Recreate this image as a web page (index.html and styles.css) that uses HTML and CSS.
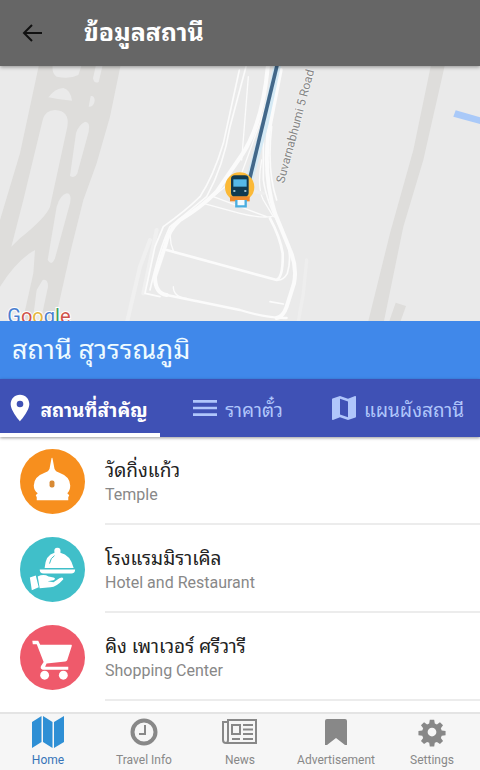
FILE: index.html
```
<!DOCTYPE html>
<html lang="th">
<head>
  <meta charset="UTF-8">
  <meta name="viewport" content="width=device-width, initial-scale=1.0">
  <title>ข้อมูลสถานี</title>
  <link rel="stylesheet" href="styles.css">
</head>
<body>
  <header class="topbar">
    <button class="back" type="button" aria-label="Back">
      <svg viewBox="0 0 24 24"><path d="M22 12H4M12 4l-8 8 8 8"/></svg>
    </button>
    <h1>ข้อมูลสถานี</h1>
  </header>

  <div class="map">
    <svg viewBox="0 18 1440 765" preserveAspectRatio="xMidYMid slice">
      <!-- runways -->
      <g fill="#dedddb">
        <path d="M120 0H365L330 170L290 310L250 420L215 560L165 783H68L100 640L105 570Q50 600 0 680V480L60 280Z"/>
        <path d="M576 0H618L550 300L490 500L432 783H385L450 520L520 270Z" transform="translate(720)"/>
        <path d="M1187 728L1218 738L1202 783H1168Z"/>
      </g>
      <g fill="#eaeaea">
        <path d="M158 15H245L235 45Q210 58 170 50Q155 40 158 15Z"/>
        <path d="M145 112Q165 85 190 84Q212 90 216 122Q180 120 145 112Z"/>
        <path d="M288 15H308L296 66Q282 72 279 55Z"/>
        <path d="M272 108Q284 106 284 122Q282 140 266 140Z"/>
        <path d="M128 180Q136 150 165 150Q210 152 202 200L150 440Q140 470 60 535L34 560L70 420Z"/>
        <path d="M255 185Q272 185 266 215L232 340Q225 356 210 348L228 220Q235 195 255 185Z"/>
        <path d="M200 400Q216 400 210 430L165 595Q155 620 143 600L170 440Q180 405 200 400Z"/>
        <path d="M128 660Q144 655 144 680L122 783H98L110 690Z"/>
      </g>
      <path d="M1367 151L1440 172V192L1360 170Z" fill="#a9c9f8"/>
      <!-- roads -->
      <g fill="none" stroke="#fbfbfb" stroke-linecap="round" stroke-linejoin="round">
        <path stroke="#f0f0f0" stroke-width="12" d="M450 540L420 620L382 783M470 510L430 700"/>
        <path stroke-width="5" d="M718 30L670 250Q640 350 600 410Q560 450 490 500L465 560L435 700L480 710M738 20L690 200Q670 320 620 410Q560 460 510 500Q480 560 450 690"/>
        <path stroke-width="12" d="M805 0Q790 200 715 300L650 395Q600 445 540 480Q505 510 495 560L465 650Q465 700 500 705"/>
        <path stroke-width="7" d="M500 705L720 750Q800 775 860 774"/>
        <path stroke-width="8" d="M500 570L720 630L830 660Q850 650 848 580Q840 530 810 475"/>
        <path stroke-width="4" d="M515 500Q505 540 520 572M610 430L720 460Q780 475 815 470M640 410L720 440L800 470M520 680Q520 710 560 715M830 0L790 160L725 340L620 425M785 300Q770 380 790 420L820 470M745 50L725 300"/>
        <path stroke-width="12" d="M842 30L805 220Q790 350 825 460L870 570Q892 620 882 670L860 740Q850 770 830 774"/>
        <path stroke-width="5" d="M790 210V360Q800 430 850 520Q880 580 862 640Q850 662 830 660M815 200Q800 330 830 420M810 725L850 732"/>
        <path stroke="#eeeeee" stroke-width="10" d="M920 600L910 700L895 783M790 400L700 380"/>
      </g>
      <path d="M835 0L795 190L748 360" fill="none" stroke="#d5eaf5" stroke-width="22"/>
      <path d="M835 0L747 365" fill="none" stroke="#42688a" stroke-width="11"/>
      <!-- station marker -->
      <circle cx="719" cy="381" r="44" fill="#fbb937"/>
      <path d="M690 409H749V424H690Z" fill="#f08a2c"/>
      <path d="M709 420V439H737V420" fill="#f4fbff" stroke="#4aaee0" stroke-width="7"/>
      <rect x="693" y="346" width="53" height="63" rx="11" fill="#103a50"/>
      <path d="M700 358H740V380H700Z" fill="#55b9e8"/>
      <path d="M700 393H706M733 393H739" stroke="#cdeaf5" stroke-width="5"/>
      <text class="road-name" transform="translate(852 371) rotate(-75)">Suvarnabhumi 5 Road</text>
      <text class="logo" x="22" y="789"><tspan fill="#4b7fd0">G</tspan><tspan fill="#d0524a">o</tspan><tspan fill="#e5b63d">o</tspan><tspan fill="#4b7fd0">g</tspan><tspan fill="#3f9f62">l</tspan><tspan fill="#d0524a">e</tspan></text>
    </svg>
  </div>

  <h2 class="station">สถานี สุวรรณภูมิ</h2>

  <div class="tabs" role="tablist">
    <button class="tab active" type="button" role="tab" aria-selected="true">
      <svg viewBox="0 0 24 24"><path d="M12 2C8 2 5 5 5 9c0 5.200 7 13 7 13s7-7.800 7-13c0-4-3-7-7-7zm0 9.500a2.500 2.500 0 1 1 0-5 2.500 2.500 0 0 1 0 5z"/></svg>
      สถานที่สำคัญ
    </button>
    <button class="tab" type="button" role="tab" aria-selected="false">
      <svg viewBox="0 0 24 24"><path d="M3 18h18v-2H3zm0-5h18v-2H3zm0-7v2h18V6z"/></svg>
      ราคาตั๋ว
    </button>
    <button class="tab" type="button" role="tab" aria-selected="false">
      <svg viewBox="0 0 24 24"><path d="M20.500 3l-.2.030L15 5.100 9 3 3.400 4.900c-.2.100-.4.250-.4.500V20.500c0 .3.200.5.500.5l.2-.030L9 18.900l6 2.100 5.600-1.900c.2-.1.400-.25.400-.5V3.500c0-.3-.2-.5-.5-.5zM15 19l-6-2.100V5l6 2.100z"/></svg>
      แผนผังสถานี
    </button>
  </div>

  <main class="places">
    <a class="place" href="#temple">
      <svg viewBox="0 0 66 66">
        <circle cx="33" cy="33" r="33" fill="#f78f1e"/>
        <path fill="#fff" d="M32.500 9q.5 0 .7 1.500L35 20q1 3 5 4 11 4 11 13 0 5-3 8l2 2-1 2v3H17v-3l-1-2 2-2q-4-3-4-8 0-9 11-13 4-1 5-4l1.800-9.500Q32 9 32.500 9z"/>
        <rect x="30" y="32" width="5" height="7" rx="2" fill="#d88a35"/>
      </svg>
      <div class="info"><h3>วัดกิ่งแก้ว</h3><p>Temple</p></div>
    </a>
    <a class="place" href="#hotel">
      <svg viewBox="0 0 66 66">
        <circle cx="33" cy="33" r="33" fill="#40bfc9"/>
        <path fill="#fff" d="M25 31.500Q26 18 35 16q-1-5 3-5t3 5q10 2 13.500 15.500zM20 33h36q0 4-4 4H24q-4 0-4-4z"/>
        <path fill="none" stroke="#40bfc9" d="M30 27q1-6 5-8"/>
        <path fill="#fff" d="M10 41l6-2 3 12-7 3zM18 40q6-3 11 0l5 1q3 1 0 3l-6 1 6 1 6-4q4-2 4 1-7 8-13 8l-11 1z"/>
      </svg>
      <div class="info"><h3>โรงแรมมิราเคิล</h3><p>Hotel and Restaurant</p></div>
    </a>
    <a class="place" href="#shopping">
      <svg viewBox="0 0 66 66">
        <circle cx="33" cy="33" r="33" fill="#ef5a6b"/>
        <path fill="#fff" d="M12.500 16h6l2 4H52q1 0 .5 1.500l-4.500 14q-.6 1.500-2 1.500l-19 2-1.500 3.500H49v3H23q-3-1-1.500-4l2.500-4-7-18h-4z"/>
        <circle cx="25" cy="51" r="4.500" fill="#fff"/>
        <circle cx="44" cy="51" r="4.500" fill="#fff"/>
      </svg>
      <div class="info"><h3>คิง เพาเวอร์ ศรีวารี</h3><p>Shopping Center</p></div>
    </a>
  </main>

  <nav class="bottom-nav">
    <a class="active" href="#home">
      <svg viewBox="0 0 32 32"><path d="M0 6l9.500-6v26L0 32zM11 0l9.500 6v26L11 26zM22 6l10-6v26l-10 6z"/></svg>
      Home
    </a>
    <a href="#travel">
      <svg viewBox="0 0 32 32"><g fill="none" stroke="currentColor"><circle cx="16" cy="16" r="11.500" stroke-width="4"/><path stroke-width="2" d="M17 9v9h-6"/></g></svg>
      Travel Info
    </a>
    <a href="#news">
      <svg class="wide" viewBox="0 0 36 32"><g fill="none" stroke="currentColor" stroke-width="2"><path d="M6 4h28v23H4q-3 0-3-3V6h5zM6 6v18q0 3-2 3M10 9h8v9h-8zM10 23h8M21 9h10M21 13.500h10M21 18h10M21 23h10"/></g></svg>
      News
    </a>
    <a href="#ads">
      <svg viewBox="0 0 32 32"><path d="M7 3h18q2 0 2 2v24h-2l-9-7-9 7H5V5q0-2 2-2z"/></svg>
      Advertisement
    </a>
    <a href="#settings">
      <svg class="small" viewBox="0 0 32 32"><path fill-rule="evenodd" d="M13.500 2h5l.7 4.300 2.400 1 3.500-2.500 3.500 3.500-2.500 3.500 1 2.400 4.400.7v4.800l-4.400.7-1 2.400 2.500 3.500-3.500 3.500-3.500-2.500-2.400 1-.7 4.200h-5l-.7-4.200-2.400-1-3.500 2.500-3.500-3.500 2.500-3.500-1-2.400-4.400-.7v-4.800l4.400-.7 1-2.400-2.500-3.500 3.500-3.500 3.500 2.500 2.400-1zM16 11a5 5 0 1 0 0 10 5 5 0 0 0 0-10z"/></svg>
      Settings
    </a>
  </nav>
</body>
</html>
```
FILE: styles.css
```
* { box-sizing: border-box; }
body { font-family: Roboto, "Noto Sans Thai Looped", "Droid Sans Thai", Loma, Waree, Garuda, "Noto Sans", sans-serif; background: #fff; color: #222; margin: 0; height: 100vh; display: flex; flex-direction: column; }
h1, h2, h3, p { margin: 0; }
button { font: inherit; border: 0; background: none; padding: 0; cursor: pointer; }
a { color: inherit; text-decoration: none; }
svg { display: block; flex: none; }

.topbar { flex: none; height: 66px; background: #666; display: flex; align-items: center; gap: 40px; padding: 0 20px; position: relative; z-index: 1; box-shadow: 0 1px 4px #0006; }
.back { width: 24px; height: 24px; }
.back svg { width: 24px; height: 24px; fill: none; stroke: #111; stroke-width: 2; }
.topbar h1 { font-size: 25px; line-height: 32px; color: #fff; }

.map { flex: 1; min-height: 0; background: #eaeaea; overflow: hidden; }
.map svg { width: 100%; height: 100%; }
.road-name { font-size: 36px; fill: #858585; stroke: #f5f5f5; stroke-width: 4px; paint-order: stroke; }
.logo { font-size: 60px; stroke: #fff; stroke-width: 6px; paint-order: stroke; }

.station { flex: none; height: 58px; line-height: 58px; padding: 0 12px; background: #4088ea; color: #effbff; font-size: 27px; font-weight: 400; }

.tabs { flex: none; height: 58px; display: grid; grid-template-columns: repeat(3, 1fr); background: #3f51b5; box-shadow: 0 1px 3px #0006; position: relative; }
.tab { display: flex; align-items: center; justify-content: center; gap: 4px; padding: 4px 8px 0 0; color: #b0c6fb; font-size: 19px; white-space: nowrap; border-bottom: 4px solid transparent; }
.tab svg { width: 32px; height: 32px; fill: currentColor; }
.tab.active { color: #fff; font-weight: bold; border-bottom-color: #fff; }

.places { flex: none; height: 275px; overflow: hidden; }
.place { display: flex; align-items: center; gap: 20px; height: 88px; padding-left: 20px; }
.place svg { width: 65px; height: 65px; }
.info { flex: 1; height: 88px; padding-top: 22px; border-bottom: 2px solid #ececec; }
.info h3 { font-size: 19px; line-height: 24px; font-weight: 400; }
.info p { font-size: 16px; line-height: 24px; color: #888; }

.bottom-nav { flex: none; height: 58px; display: grid; grid-template-columns: repeat(5, 1fr); background: #f6f6f6; border-top: 2px solid #e4e4e4; }
.bottom-nav a { display: flex; flex-direction: column; align-items: center; gap: 4px; padding-top: 2px; font-size: 12px; line-height: 16px; color: #888; }
.bottom-nav svg { width: 32px; height: 32px; fill: currentColor; }
.bottom-nav .wide { width: 36px; }
.bottom-nav .small { width: 28px; }
.bottom-nav .active { color: #3674b8; }
.bottom-nav .active svg { fill: #2e8fd5; }
```
